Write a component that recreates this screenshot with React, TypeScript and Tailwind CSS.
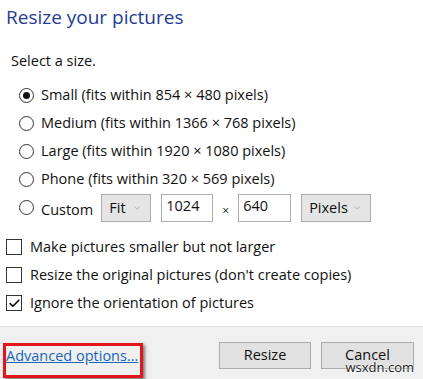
import { ChevronDown, Check } from 'lucide-react';

const sizes = [
  { label: 'Small (fits within 854 × 480 pixels)', checked: true },
  { label: 'Medium (fits within 1366 × 768 pixels)', checked: false },
  { label: 'Large (fits within 1920 × 1080 pixels)', checked: false },
  { label: 'Phone (fits within 320 × 569 pixels)', checked: false },
];

const options = [
  { label: 'Make pictures smaller but not larger', checked: false },
  { label: "Resize the original pictures (don't create copies)", checked: false },
  { label: 'Ignore the orientation of pictures', checked: true },
];

function Radio({ checked }: { checked: boolean }) {
  return (
    <span className="flex h-[15px] w-[15px] shrink-0 items-center justify-center rounded-full border border-[#333]">
      {checked && <span className="h-[7px] w-[7px] rounded-full bg-[#111]" />}
    </span>
  );
}

function Box({ checked }: { checked: boolean }) {
  return (
    <span className="flex h-[16px] w-[16px] shrink-0 items-center justify-center border border-[#333] bg-white">
      {checked && <Check className="h-[13px] w-[13px] text-black" strokeWidth={3} />}
    </span>
  );
}

function Select({ value, width }: { value: string; width: string }) {
  return (
    <div className={`flex h-[28px] items-center justify-between border border-[#adadad] bg-[#e5e5e5] pl-[7px] pr-[8px] ${width}`}>
      <span>{value}</span>
      <ChevronDown className="h-[10px] w-[10px] text-[#888]" strokeWidth={1.5} />
    </div>
  );
}

export default function App() {
  return (
    <div className="relative flex h-[379px] w-[423px] flex-col overflow-hidden bg-white font-['Segoe_UI','Open_Sans',sans-serif] text-[14.5px] text-[#111]">
      <div className="px-[6px] pt-[3px] text-[19px] leading-[28px] text-[#1f3b93]">Resize your pictures</div>

      <div className="mt-[16px] flex h-[28px] items-center px-[11px]">Select a size.</div>

      <div className="mt-[6px] flex flex-col pl-[19px]">
        {sizes.map((s) => (
          <div key={s.label} className="flex h-[28px] items-center gap-[7px]">
            <Radio checked={s.checked} />
            <span>{s.label}</span>
          </div>
        ))}
        <div className="mt-[1px] flex h-[28px] items-center">
          <div className="flex h-full items-start pt-[6px]">
            <Radio checked={false} />
          </div>
          <span className="ml-[7px] mt-[4px]">Custom</span>
          <div className="ml-[8px]">
            <Select value="Fit" width="w-[50px]" />
          </div>
          <div className="ml-[10px] h-[28px] w-[52px] border border-[#abadb3] bg-white pl-[4px] leading-[22px]">1024</div>
          <span className="mx-[9px] mt-[6px] text-[12px]">×</span>
          <div className="h-[28px] w-[53px] border border-[#abadb3] bg-white pl-[4px] leading-[22px]">640</div>
          <div className="ml-[10px]">
            <Select value="Pixels" width="w-[70px]" />
          </div>
        </div>
      </div>

      <div className="mt-[11px] flex flex-col pl-[6px]">
        {options.map((o) => (
          <div key={o.label} className="flex h-[28px] items-center gap-[8px]">
            <Box checked={o.checked} />
            <span>{o.label}</span>
          </div>
        ))}
      </div>

      <div className="mt-auto flex h-[53px] items-center border-t border-[#dfdfdf] bg-[#f0f0f0] pr-[9px]">
        <div className="relative ml-[6px] mt-[6px]">
          <span className="text-[#1a66b8] underline">Advanced options...</span>
          <div className="absolute left-[-3px] top-[-2px] h-[35px] w-[140px] border-[3px] border-[#e4141b] shadow-[2px_2px_3px_rgba(0,0,0,0.5)]" />
        </div>
        <div className="ml-auto mt-[4px] flex gap-[10px]">
          <button className="h-[27px] w-[92px] border border-[#adadad] bg-[#e1e1e1] text-[#111]">Resize</button>
          <button className="h-[27px] w-[93px] border border-[#adadad] bg-[#e1e1e1] text-[#111]">Cancel</button>
        </div>
      </div>

      <div className="absolute bottom-[5px] right-[9px] text-[13px] leading-[14px] text-[#222] [text-shadow:0_0_2px_#fff,0_0_2px_#fff]">
        wsxdn.com
      </div>
    </div>
  );
}
